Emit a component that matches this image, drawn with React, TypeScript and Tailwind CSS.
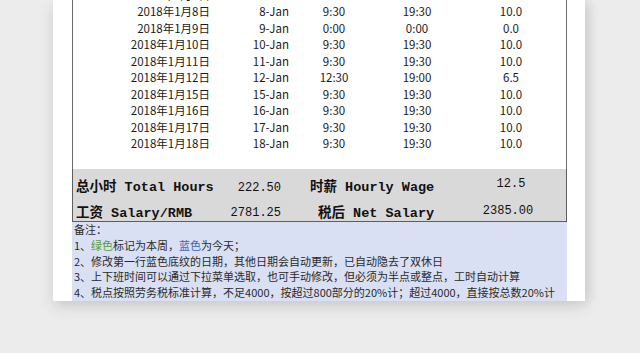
const rows = [
  ["2018年1月5日", "5-Jan", "9:30", "19:30", "10.0"],
  ["2018年1月8日", "8-Jan", "9:30", "19:30", "10.0"],
  ["2018年1月9日", "9-Jan", "0:00", "0:00", "0.0"],
  ["2018年1月10日", "10-Jan", "9:30", "19:30", "10.0"],
  ["2018年1月11日", "11-Jan", "9:30", "19:30", "10.0"],
  ["2018年1月12日", "12-Jan", "12:30", "19:00", "6.5"],
  ["2018年1月15日", "15-Jan", "9:30", "19:30", "10.0"],
  ["2018年1月16日", "16-Jan", "9:30", "19:30", "10.0"],
  ["2018年1月17日", "17-Jan", "9:30", "19:30", "10.0"],
  ["2018年1月18日", "18-Jan", "9:30", "19:30", "10.0"],
];

const sans = "font-['Noto_Sans_CJK_SC','Noto_Sans',sans-serif]";
const mono = "font-['Liberation_Mono','Noto_Sans_CJK_SC',monospace]";

export default function App() {
  return (
    <div className="w-[640px] h-[353px] overflow-hidden bg-[#ececec]">
      <div className="ml-[53px] w-[532px] h-[301px] bg-white pl-[19px] shadow-[0_6px_14px_rgba(0,0,0,0.12),6px_0_10px_rgba(0,0,0,0.06)]">
        <div className="w-[495px] h-full flex flex-col">
          {/* data rows */}
          <div className={`h-[169px] overflow-hidden border-x border-[#6b6b6b] text-[11.5px] text-[#1a1a1a] ${sans}`}>
            <div className="mt-[-12.75px]">
              {rows.map((r) => (
                <div key={r[0]} className="grid grid-cols-[137px_79px_90px_76px_112px] h-[16.5px] items-center leading-none">
                  <div className="text-right">{r[0]}</div>
                  <div className="text-right">{r[1]}</div>
                  <div className="text-center">{r[2]}</div>
                  <div className="text-center">{r[3]}</div>
                  <div className="text-center">{r[4]}</div>
                </div>
              ))}
            </div>
          </div>

          {/* totals */}
          <div className={`h-[53px] bg-[#d9d9d9] border-x border-b border-[#5e5e5e] text-[#111] ${mono}`}>
            <div className="grid grid-cols-[137px_79px_166px_112px] h-[26px] items-end">
              <div className="pl-[3px] text-[13.5px] font-bold leading-none pb-[1px] whitespace-nowrap">总小时 Total Hours</div>
              <div className="text-right pr-[8px] text-[12px] leading-none pb-[1px]">222.50</div>
              <div className="pl-[21px] text-[13.5px] font-bold leading-none pb-[1px] whitespace-nowrap">时薪 Hourly Wage</div>
              <div className="text-center text-[12px] leading-none pb-[5px]">12.5</div>
            </div>
            <div className="grid grid-cols-[137px_79px_166px_112px] h-[26px] items-end">
              <div className="pl-[3px] text-[13.5px] font-bold leading-none pb-[1px] whitespace-nowrap">工资 Salary/RMB</div>
              <div className="text-right pr-[8px] text-[12px] leading-none pb-[2px]">2781.25</div>
              <div className="pl-[29px] text-[13.5px] font-bold leading-none pb-[1px] whitespace-nowrap">税后 Net Salary</div>
              <div className="text-center text-[12px] leading-none pb-[4px] pr-[6px]">2385.00</div>
            </div>
          </div>

          {/* notes */}
          <div className={`flex-1 bg-[#d9e0f3] pl-[2px] text-[11px] leading-[15.8px] text-[#2a2a2a] whitespace-nowrap ${sans}`}>
            <div>备注：</div>
            <div>
              1、<span className="text-[#5c9c3a]">绿色</span>标记为本周，<span className="text-[#3d62b5]">蓝色</span>为今天；
            </div>
            <div>2、修改第一行蓝色底纹的日期，其他日期会自动更新，已自动隐去了双休日</div>
            <div>3、上下班时间可以通过下拉菜单选取，也可手动修改，但必须为半点或整点，工时自动计算</div>
            <div>4、税点按照劳务税标准计算，不足4000，按超过800部分的20%计；超过4000，直接按总数20%计</div>
          </div>
        </div>
      </div>
    </div>
  );
}
